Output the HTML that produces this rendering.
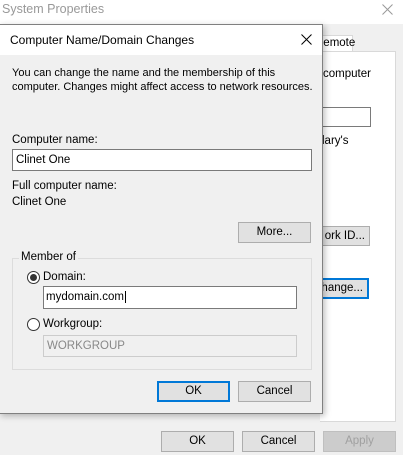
<!DOCTYPE html>
<html><head><style>
*{box-sizing:border-box;margin:0;padding:0}
body{width:403px;height:455px;background:#f0f0f0;font-family:"Liberation Sans",sans-serif;font-size:11px;color:#000;position:relative;overflow:hidden}
.a{position:absolute}
.btn{position:absolute;background:#e1e1e1;border:1px solid #adadad;text-align:center;line-height:18px;font-size:11.5px;overflow:hidden;white-space:nowrap}
.blue{border:2px solid #0078d7;line-height:16px}
.inp{position:absolute;background:#fff;border:1px solid #7a7a7a;padding-left:3px;line-height:20px;font-size:11.5px}
</style></head><body>
<div class="a" style="left:0;top:0;width:403px;height:24px;background:#fff"></div>
<div class="a" style="left:2px;top:2px;font-size:12.5px;color:#999">System Properties</div>
<svg class="a" style="left:382px;top:4px" width="11" height="11"><path d="M0.5 0.5L10.5 10.5M10.5 0.5L0.5 10.5" stroke="#999" stroke-width="1"/></svg>
<div class="a" style="left:311px;top:35px;width:42px;height:17px;background:#fff;border:1px solid #d9d9d9;border-bottom:none;line-height:15px;padding-left:3px;font-size:11.5px">Remote</div>
<div class="a" style="left:320px;top:51px;width:76px;height:371px;background:#fff;border:1px solid #d9d9d9;border-left:none"></div>
<div class="a" style="left:323px;top:68px;font-size:11.5px">computer</div>
<div class="a" style="left:322px;top:107px;width:49px;height:20px;border:1px solid #7a7a7a;background:#fff"></div>
<div class="a" style="left:322px;top:135px;font-size:11.5px">lary's</div>
<div class="btn" style="left:310px;top:226px;width:60px;height:20px;text-align:right;padding-right:4px">ork ID...</div>
<div class="btn blue" style="left:310px;top:278px;width:59px;height:21px;text-align:right;padding-right:4px">hange...</div>
<div class="btn" style="left:161px;top:431px;width:73px;height:21px">OK</div>
<div class="btn" style="left:242px;top:431px;width:73px;height:21px">Cancel</div>
<div class="btn" style="left:323px;top:431px;width:73px;height:21px;color:#a0a0a0;border-color:#bfbfbf;background:#ccc">Apply</div>

<div class="a" style="left:-1px;top:24px;width:324px;height:390px;background:#f0f0f0;border:1px solid #808080;box-shadow:2px 2px 6px rgba(0,0,0,.25)"></div>
<div class="a" style="left:0;top:25px;width:322px;height:30px;background:#fff"></div>
<div class="a" style="left:10px;top:33px;font-size:12px">Computer Name/Domain Changes</div>
<svg class="a" style="left:301px;top:34px" width="11" height="11"><path d="M0.5 0.5L10.5 10.5M10.5 0.5L0.5 10.5" stroke="#000" stroke-width="1"/></svg>
<div class="a" style="left:12px;top:66px;line-height:14px">You can change the name and the membership of this<br>computer. Changes might affect access to network resources.</div>
<div class="a" style="left:12px;top:134px;font-size:11.5px">Computer name:</div>
<div class="inp" style="left:12px;top:149px;width:300px;height:22px">Clinet One</div>
<div class="a" style="left:12px;top:180px;font-size:11.5px">Full computer name:</div>
<div class="a" style="left:12px;top:196px;font-size:11.5px">Clinet One</div>
<div class="btn" style="left:238px;top:222px;width:73px;height:21px">More...</div>
<div class="a" style="left:12px;top:258px;width:300px;height:112px;border:1px solid #dcdcdc"></div>
<div class="a" style="left:19px;top:251px;background:#f0f0f0;padding:0 2px;font-size:11.5px">Member of</div>
<div class="a" style="left:27px;top:271px;width:13px;height:13px;border:1px solid #333;border-radius:50%;background:#fff"></div>
<div class="a" style="left:30px;top:274px;width:7px;height:7px;border-radius:50%;background:#333"></div>
<div class="a" style="left:43px;top:271px;font-size:11.5px">Domain:</div>
<div class="inp blue" style="left:43px;top:286px;width:254px;height:23px;border-width:1px;line-height:20px;padding-left:2px">mydomain.com<span style="border-left:1px solid #000;margin-left:1px"></span></div>
<div class="a" style="left:27px;top:318px;width:13px;height:13px;border:1px solid #333;border-radius:50%;background:#fff"></div>
<div class="a" style="left:43px;top:318px;font-size:11.5px">Workgroup:</div>
<div class="inp" style="left:43px;top:335px;width:254px;height:22px;background:#f0f0f0;border-color:#ccc;color:#888">WORKGROUP</div>
<div class="btn blue" style="left:157px;top:381px;width:73px;height:21px">OK</div>
<div class="btn" style="left:238px;top:381px;width:73px;height:21px">Cancel</div>
</body></html>
